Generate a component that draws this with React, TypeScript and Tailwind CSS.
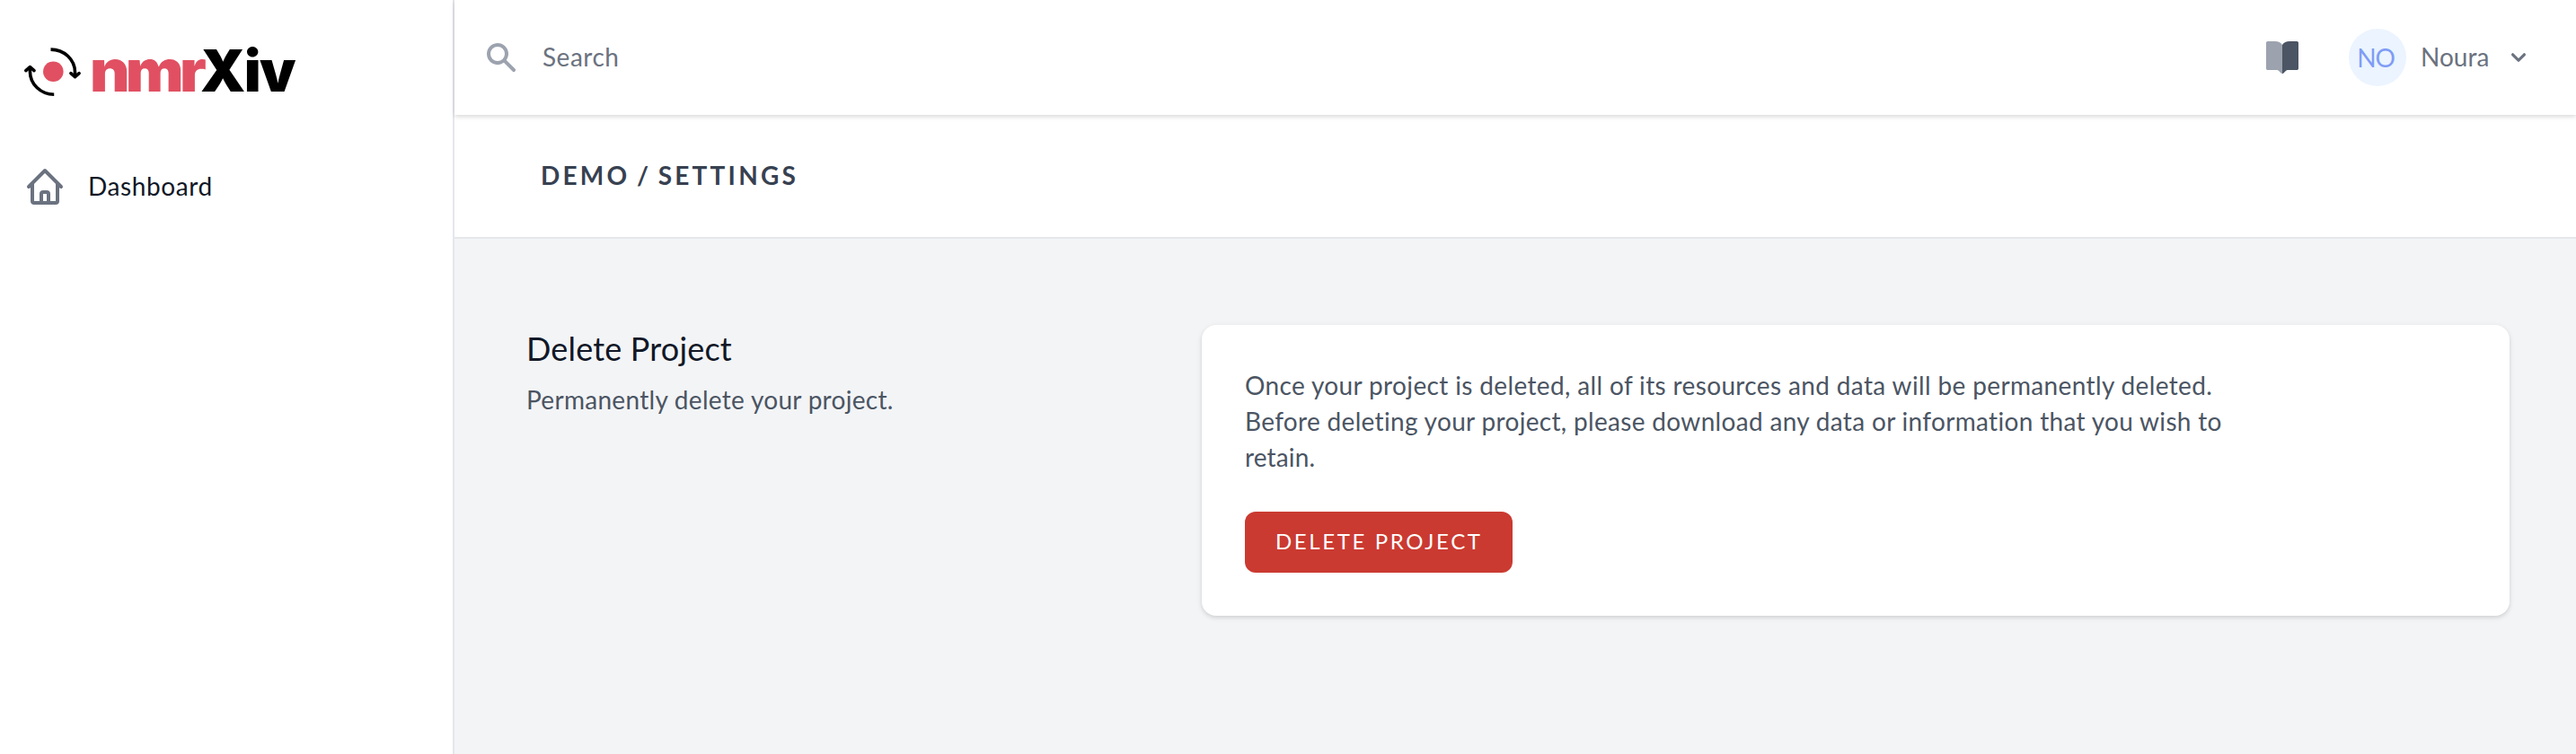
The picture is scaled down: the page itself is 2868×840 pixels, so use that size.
import React from "react";

function LogoMark() {
  return (
    <svg className="h-[64px] w-[74px] shrink-0" viewBox="26 48 74 64" fill="none">
      <circle cx="59.3" cy="79.8" r="11.3" fill="#e15062" />
      <g stroke="#000" strokeWidth="3.6">
        <path d="M56.5 55.1C71.5 55.1 83.5 66.5 83.5 80.5V85" />
        <path d="M60.2 105.2C45.5 105.2 33.4 94 33.4 79.5V75" />
        <path d="M78.9 81.6L83.5 85.6L88.1 81.6" strokeLinecap="round" strokeLinejoin="round" />
        <path d="M28.8 78.6L33.4 74.6L38 78.6" strokeLinecap="round" strokeLinejoin="round" />
      </g>
    </svg>
  );
}

function HomeIcon() {
  return (
    <svg className="size-12" viewBox="0 0 24 24" fill="none" stroke="#6b7280" strokeWidth="2" strokeLinecap="round" strokeLinejoin="round">
      <path d="M3 12l2-2m0 0l7-7 7 7M5 10v10a1 1 0 001 1h3m10-11l2 2m-2-2v10a1 1 0 01-1 1h-3m-6 0a1 1 0 001-1v-4a1 1 0 011-1h2a1 1 0 011 1v4a1 1 0 001 1m-6 0h6" />
    </svg>
  );
}

function SearchIcon() {
  return (
    <svg className="size-10" viewBox="0 0 20 20" fill="#9ca3af">
      <path fillRule="evenodd" clipRule="evenodd" d="M8 4a4 4 0 100 8 4 4 0 000-8zM2 8a6 6 0 1110.89 3.476l4.817 4.817a1 1 0 01-1.414 1.414l-4.816-4.816A6 6 0 012 8z" />
    </svg>
  );
}

function BookIcon() {
  return (
    <svg className="size-9" viewBox="0 0 36 36">
      <path fill="#9ca3af" d="M1.8 0H10C13.5 0 16.5 1.6 18 4V36C17.2 36 16.6 35.7 16.1 35.1L14.4 33.3C13.6 32.5 12.6 32 11.4 32H1.8C.8 32 0 31.2 0 30.2V1.8C0 .8.8 0 1.8 0Z" />
      <path fill="#4b5563" d="M34.2 0H26C22.5 0 19.5 1.6 18 4V36C18.8 36 19.4 35.7 19.9 35.1L21.6 33.3C22.4 32.5 23.4 32 24.6 32H34.2C35.2 32 36 31.2 36 30.2V1.8C36 .8 35.2 0 34.2 0Z" />
    </svg>
  );
}

function ChevronIcon() {
  return (
    <svg className="size-8" viewBox="0 0 20 20" fill="#6b7280">
      <path fillRule="evenodd" clipRule="evenodd" d="M5.293 7.293a1 1 0 011.414 0L10 10.586l3.293-3.293a1 1 0 111.414 1.414l-4 4a1 1 0 01-1.414 0l-4-4a1 1 0 010-1.414z" />
    </svg>
  );
}

function Sidebar() {
  return (
    <aside className="flex w-[506px] shrink-0 flex-col border-r-2 border-[#e5e7eb] bg-white pt-12 pl-[26px]">
      <div className="flex h-16 font-['Inter',sans-serif] text-[64px] leading-[62px] font-black">
        <LogoMark />
        <span className="w-[123px] origin-left scale-x-[1.057] text-[65px] tracking-[-4.5px] text-[#e15062]">nmr</span>
        <span className="relative tracking-[-1.6px] text-black">Xiv</span>
      </div>
      <nav className="mt-[72px]">
        <a href="#" className="flex items-center gap-6">
          <HomeIcon />
          <span className="pb-[2px] tracking-[0.59px] text-[#111827]">Dashboard</span>
        </a>
      </nav>
    </aside>
  );
}

function TopBar() {
  return (
    <header className="relative z-10 flex h-32 shrink-0 items-center justify-between bg-white pr-12 pl-8 shadow-[0_2px_6px_rgba(0,0,0,0.1),0_2px_4px_rgba(0,0,0,0.06)]">
      <div className="flex items-center gap-[26px]">
        <SearchIcon />
        <span className="pb-[2px] tracking-[0.5px] text-[#6b7280]">Search</span>
      </div>
      <div className="flex items-center">
        <BookIcon />
        <div className="ml-14 flex size-16 items-center justify-center rounded-full bg-[#ebf4ff] pr-1 tracking-[-1.1px] text-[#7f9cf5]">NO</div>
        <span className="ml-4 w-[93px] pb-[2px] text-[#6b7280]">Noura</span>
        <ChevronIcon />
      </div>
    </header>
  );
}

export default function App() {
  return (
    <div className="flex h-[840px] w-[2868px] overflow-hidden bg-[#f3f4f6] font-['Lato',sans-serif] text-[28px] leading-10">
      <Sidebar />
      <div className="flex min-w-0 flex-1 flex-col">
        <TopBar />
        <div className="flex h-[138px] shrink-0 items-center border-b-2 border-[#e5e7eb] bg-white pl-24">
          <h1 className="pb-[2px] font-bold tracking-[3.22px] text-[#374151] [word-spacing:-2.5px]">DEMO / SETTINGS</h1>
        </div>
        <main className="flex items-start pt-24 pl-20">
          <section className="w-[752px] pt-[2px]">
            <h2 className="text-[36px] leading-[48px] tracking-[0.18px] text-[#111827]">Delete Project</h2>
            <p className="mt-[13px] tracking-[0.29px] text-[#4b5563]">Permanently delete your project.</p>
          </section>
          <section className="h-[324px] w-[1456px] rounded-2xl bg-white px-12 pt-[47px] shadow-[0_2px_6px_rgba(0,0,0,0.1),0_2px_4px_rgba(0,0,0,0.06)]">
            <p className="whitespace-nowrap text-[#4b5563]">
              <span className="block tracking-[0.36px]">Once your project is deleted, all of its resources and data will be permanently deleted.</span>
              <span className="block tracking-[0.32px]">Before deleting your project, please download any data or information that you wish to</span>
              <span className="block tracking-[0.15px]">retain.</span>
            </p>
            <button className="mt-[41px] flex h-[68px] w-[298px] items-center rounded-xl bg-[#ca3a31] pb-[2px] pl-[34px] text-[24px] tracking-[2.62px] whitespace-nowrap text-white">DELETE PROJECT</button>
          </section>
        </main>
      </div>
    </div>
  );
}
